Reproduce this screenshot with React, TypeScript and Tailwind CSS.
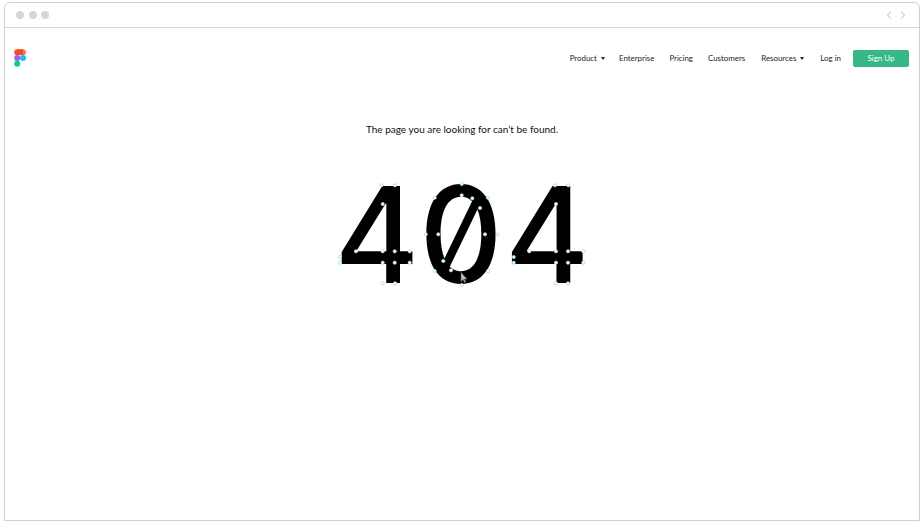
const nodes: [number, number][] = [
  [381.3,185.3],[395,185.3],[382.7,204],[356,251.3],[382.7,251.3],[394.7,251.3],[409.7,251.3],[409.7,262.7],[394.7,262.7],[382.7,262.7],[340,262.7],[340,256.7],[382.7,283.3],[395,283.3],
  [461.7,184],[461.7,195.3],[472.3,198.3],[480,208],[488,197.7],[497.7,234.3],[485,234.3],[488,271],[461.7,285],[451,270.3],[443.3,261],[434.7,271],[438.3,234.3],[425.7,234.3],[434.7,197.7],
  [555,185.3],[568.3,185.3],[556,204],[529.3,251.3],[556,251.3],[568,251.3],[583.3,251.3],[583.3,262.7],[568,262.7],[556,262.7],[513.7,262.7],[513.7,257],[556,283.3],[568,283.3],
];

function Caret() {
  return <span className="ml-[4px] inline-block h-0 w-0 border-x-[2.5px] border-t-[3.5px] border-x-transparent border-t-[#222]" />;
}

function FigmaLogo() {
  return (
    <svg width="13" height="19" viewBox="0 0 13 19" className="shrink-0">
      <circle cx="3.2" cy="3.2" r="3" fill="#f24e1e" />
      <circle cx="9" cy="3.2" r="3" fill="#ff7262" />
      <rect x="3" y="0.2" width="6" height="6" fill="#f24e1e" />
      <circle cx="3.2" cy="9" r="3" fill="#a259ff" />
      <circle cx="9" cy="9" r="3" fill="#1abcfe" />
      <circle cx="3.2" cy="14.8" r="3" fill="#0acf83" />
    </svg>
  );
}

export default function App() {
  return (
    <div className="relative h-[531px] w-[924px] overflow-hidden bg-white pb-[10px] pl-[4px] pr-[4px] pt-[2px] font-['Lato',sans-serif]">
      <div className="flex h-[519px] flex-col rounded-t-[6px] border border-[#cfcfcf] bg-white">
        <div className="flex h-[25px] shrink-0 items-center justify-between border-b border-[#d8d8d8] pl-[11px] pr-[13px]">
          <div className="flex gap-[4.5px]">
            <span className="h-2 w-2 rounded-full bg-[#d6d6d6]" />
            <span className="h-2 w-2 rounded-full bg-[#d6d6d6]" />
            <span className="h-2 w-2 rounded-full bg-[#d6d6d6]" />
          </div>
          <div className="flex gap-[8px]">
            <svg width="6" height="8" viewBox="0 0 6 8" fill="none" stroke="#d4d4d4" strokeWidth="1.2"><path d="M5 .5 1.5 4 5 7.5" /></svg>
            <svg width="6" height="8" viewBox="0 0 6 8" fill="none" stroke="#d4d4d4" strokeWidth="1.2"><path d="M1 .5 4.5 4 1 7.5" /></svg>
          </div>
        </div>
        <div className="flex flex-col">
          <div className="mt-[21px] flex h-[19px] items-center justify-between pl-[9px] pr-[10px]">
            <FigmaLogo />
            <nav className="flex items-center text-[7.9px] text-[#222]">
              <span className="flex items-center">Product<Caret /></span>
              <span className="ml-[14px]">Enterprise</span>
              <span className="ml-[15px]">Pricing</span>
              <span className="ml-[15px]">Customers</span>
              <span className="ml-[16px] flex items-center">Resources<Caret /></span>
              <span className="ml-[16px]">Log in</span>
              <span className="ml-[12px] flex h-[17px] w-[56px] items-center justify-center rounded-[2px] bg-[#35b886] text-white">Sign Up</span>
            </nav>
          </div>
          <p className="mt-[54px] text-center text-[10px] leading-[14px] text-[#111]">The page you are looking for can’t be found.</p>
          <div className="mt-[28px] flex h-[140px] scale-x-[0.965] items-center justify-center font-['Inter',sans-serif] text-[134px] font-[470] leading-none text-black">
            <span>4</span><span className="[font-feature-settings:'zero']">0</span><span className="ml-[2px]">4</span>
          </div>
        </div>
      </div>
      <svg width="924" height="531" className="pointer-events-none absolute left-0 top-0">
        {nodes.map(([x, y], i) => (
          <circle key={i} cx={x} cy={y} r="1.6" fill="white" stroke="#9bdcf2" strokeWidth="0.8" />
        ))}
        <path d="M461 272.5v9l2-2 1.5 3 1.2-.6-1.5-2.8h2.8z" fill="#bbb" stroke="#666" strokeWidth="0.5" />
      </svg>
    </div>
  );
}
